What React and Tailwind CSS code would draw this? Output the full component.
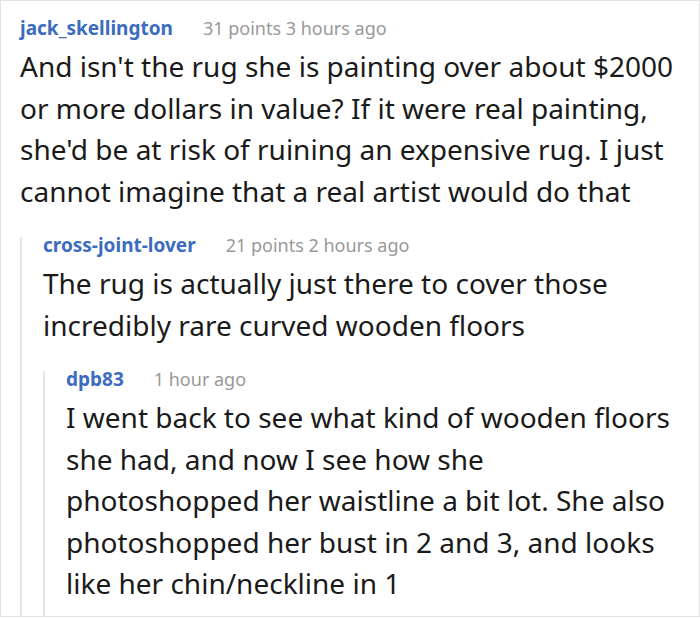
const comments = {
  user: 'jack_skellington',
  meta: '31 points 3 hours ago',
  lines: [
    'And isn\'t the rug she is painting over about $2000',
    'or more dollars in value? If it were real painting,',
    'she\'d be at risk of ruining an expensive rug. I just',
    'cannot imagine that a real artist would do that',
  ],
  replies: [
    {
      user: 'cross-joint-lover',
      meta: '21 points 2 hours ago',
      lines: [
        'The rug is actually just there to cover those',
        'incredibly rare curved wooden floors',
      ],
      replies: [
        {
          user: 'dpb83',
          meta: '1 hour ago',
          lines: [
            'I went back to see what kind of wooden floors',
            'she had, and now I see how she',
            'photoshopped her waistline a bit lot. She also',
            'photoshopped her bust in 2 and 3, and looks',
            'like her chin/neckline in 1',
          ],
          replies: [],
        },
      ],
    },
  ],
}

const Comment = ({ comment, nested }) => (
  <div className={nested ? 'flex flex-col flex-1 border-l-2 border-[#e6e6e6] pl-[21px] mt-[25px]' : 'flex flex-col flex-1'}>
    <div className="flex items-baseline gap-[30px] leading-[16px]">
      <span className="text-[19px] font-bold text-[#3b6cc0]">{comment.user}</span>
      <span className="text-[18px] text-[#999999]">{comment.meta}</span>
    </div>
    <p className="mt-[10px] text-[28px] leading-[41.5px] text-[#1a1a1a] whitespace-nowrap">
      {comment.lines.map((l, i) => (
        <span key={i} className="block">{l}</span>
      ))}
    </p>
    {comment.replies.map((r) => (
      <Comment key={r.user} comment={r} nested />
    ))}
  </div>
)

export default function App() {
  return (
    <div
      className="w-[700px] h-[618px] bg-white overflow-hidden"
      style={{ fontFamily: '"Noto Sans", "Open Sans", sans-serif' }}
    >
      <div className="h-[617px] flex flex-col border border-[#e3e3e3] pl-[19px] pr-[8px] pt-[19px]">
        <Comment comment={comments} />
      </div>
    </div>
  )
}
